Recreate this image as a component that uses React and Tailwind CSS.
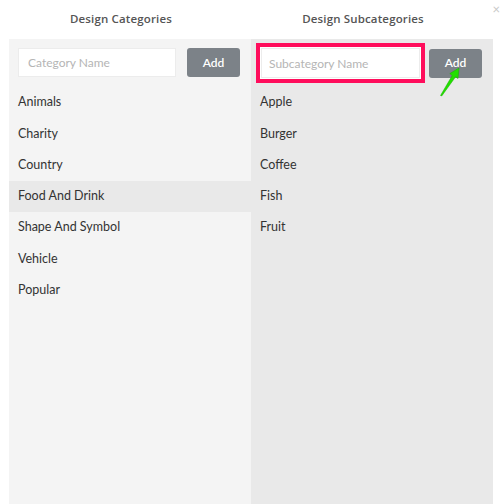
import React from "react";

const cats = ["Animals", "Charity", "Country", "Food And Drink", "Shape And Symbol", "Vehicle", "Popular"];
const subs = ["Apple", "Burger", "Coffee", "Fish", "Fruit"];

export default function App() {
  return (
    <div className="relative w-[502px] h-[504px] bg-white overflow-hidden flex flex-col" style={{ fontFamily: "Lato, 'Open Sans', sans-serif" }}>
      <div className="absolute right-[2px] top-[3px] text-[13px] leading-none text-[#c8c8c8]">×</div>
      <div className="flex h-[39px] items-center text-[11.5px] font-semibold text-[#555] tracking-[0.15px] pb-[1px]" style={{ fontFamily: "'Open Sans', sans-serif" }}>
        <div className="w-[242px] text-center">Design Categories</div>
        <div className="w-[242px] text-center">Design Subcategories</div>
      </div>
      <div className="flex flex-1 pl-[9px] pr-[9px]">
        <div className="w-[242px] bg-[#f4f4f4] pt-[9px]">
          <div className="flex items-center pl-[9px]">
            <input
              className="w-[158px] h-[29px] bg-white border border-[#ececec] px-[9px] text-[12px] text-[#333] placeholder:text-[#b5b5b5] outline-none"
              placeholder="Category Name"
            />
            <button className="ml-[11px] w-[53px] h-[29px] rounded-[3px] bg-[#7c8288] text-white text-[12px] font-semibold">Add</button>
          </div>
          <div className="mt-[10px]">
            {cats.map((c) => (
              <div
                key={c}
                className={`h-[31.3px] flex items-center pl-[9px] text-[12.5px] text-[#333] ${c === "Food And Drink" ? "bg-[#e9e9e9]" : ""}`}
              >
                {c}
              </div>
            ))}
          </div>
        </div>
        <div className="w-[242px] bg-[#e9e9e9] pt-[4px]">
          <div className="flex items-center pl-[5px]">
            <div className="relative w-[169px] h-[40px] border-[4px] border-[#ff0d5c] bg-white p-[1px]">
              <input
                className="w-full h-full bg-white border border-[#ececec] px-[7px] text-[12px] text-[#333] placeholder:text-[#b5b5b5] outline-none"
                placeholder="Subcategory Name"
              />
            </div>
            <button className="ml-[4px] w-[53px] h-[29px] rounded-[3px] bg-[#7c8288] text-white text-[12px] font-semibold">Add</button>
          </div>
          <div className="mt-[4px]">
            {subs.map((c) => (
              <div key={c} className="h-[31.3px] flex items-center pl-[9px] text-[12.5px] text-[#333]">
                {c}
              </div>
            ))}
          </div>
        </div>
      </div>
      <svg className="absolute left-[438px] top-[66px]" width="26" height="32" viewBox="0 0 26 32">
        <path d="M2.5 29.5 L14.2 9.6 L11.8 7.6 L21 2 L20 12.6 L17.6 10.8 L3.8 29.9 Z" fill="#22e000" stroke="#19b000" strokeWidth="0.5" strokeLinejoin="round" />
      </svg>
    </div>
  );
}
